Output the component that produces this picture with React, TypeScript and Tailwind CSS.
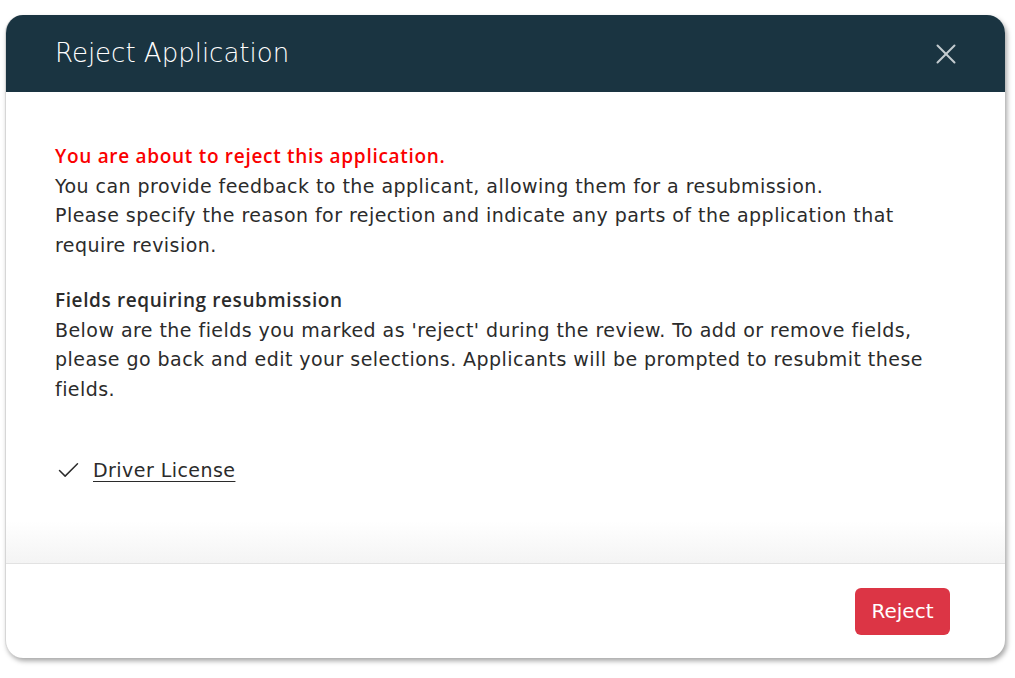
import { X, Check } from 'lucide-react';

export default function App() {
  return (
    <div className="min-h-screen bg-white pl-[5px] pr-[10px] pt-[15px] font-['DejaVu_Sans',sans-serif]">
      <div className="flex h-[643px] w-[1000px] flex-col overflow-hidden rounded-[18px] border-l border-[#d6d6d6] bg-white shadow-[2px_3px_5px_rgba(0,0,0,0.35)]">
        {/* header */}
        <div className="flex h-[77px] shrink-0 items-center justify-between bg-[#1a3441] pl-[49px] pr-[42px]">
          <h2 className="text-[26px] font-extralight text-white">Reject Application</h2>
          <button type="button" className="text-[#c3cbcf]">
            <X size={34} strokeWidth={1.4} />
          </button>
        </div>

        {/* body */}
        <div className="relative flex flex-1 flex-col pl-[49px] pr-[50px] pt-[50px] text-[19px] leading-[29.5px] tracking-[0.45px] text-[#2b2b2b]">
          <p>
            <span className="font-['Open_Sans',sans-serif] font-semibold tracking-[0.7px] text-[#fa0000]">
              You are about to reject this application.
            </span>
            <br />
            You can provide feedback to the applicant, allowing them for a resubmission.
            <br />
            Please specify the reason for rejection and indicate any parts of the application that require revision.
          </p>

          <div className="mt-[26px]">
            <h3 className="font-['Open_Sans',sans-serif] font-semibold tracking-[0.6px]">
              Fields requiring resubmission
            </h3>
            <p>
              Below are the fields you marked as 'reject' during the review. To add or remove fields, please go
              back and edit your selections. Applicants will be prompted to resubmit these fields.
            </p>
          </div>

          <ul className="mt-[52px]">
            <li className="flex items-center gap-[11px]">
              <Check size={27} strokeWidth={1.3} className="text-[#2b2b2b]" />
              <a href="#" className="underline underline-offset-[4px]">
                Driver License
              </a>
            </li>
          </ul>

          <div className="absolute bottom-0 left-0 right-0 h-[42px] bg-gradient-to-b from-white to-[#f4f4f4]" />
        </div>

        {/* footer */}
        <div className="flex h-[95px] shrink-0 items-center justify-end border-t border-[#e2e2e2] pr-[55px]">
          <button
            type="button"
            className="h-[47px] w-[95px] rounded-[6px] bg-[#dc3545] text-[20px] text-white"
          >
            Reject
          </button>
        </div>
      </div>
    </div>
  );
}
